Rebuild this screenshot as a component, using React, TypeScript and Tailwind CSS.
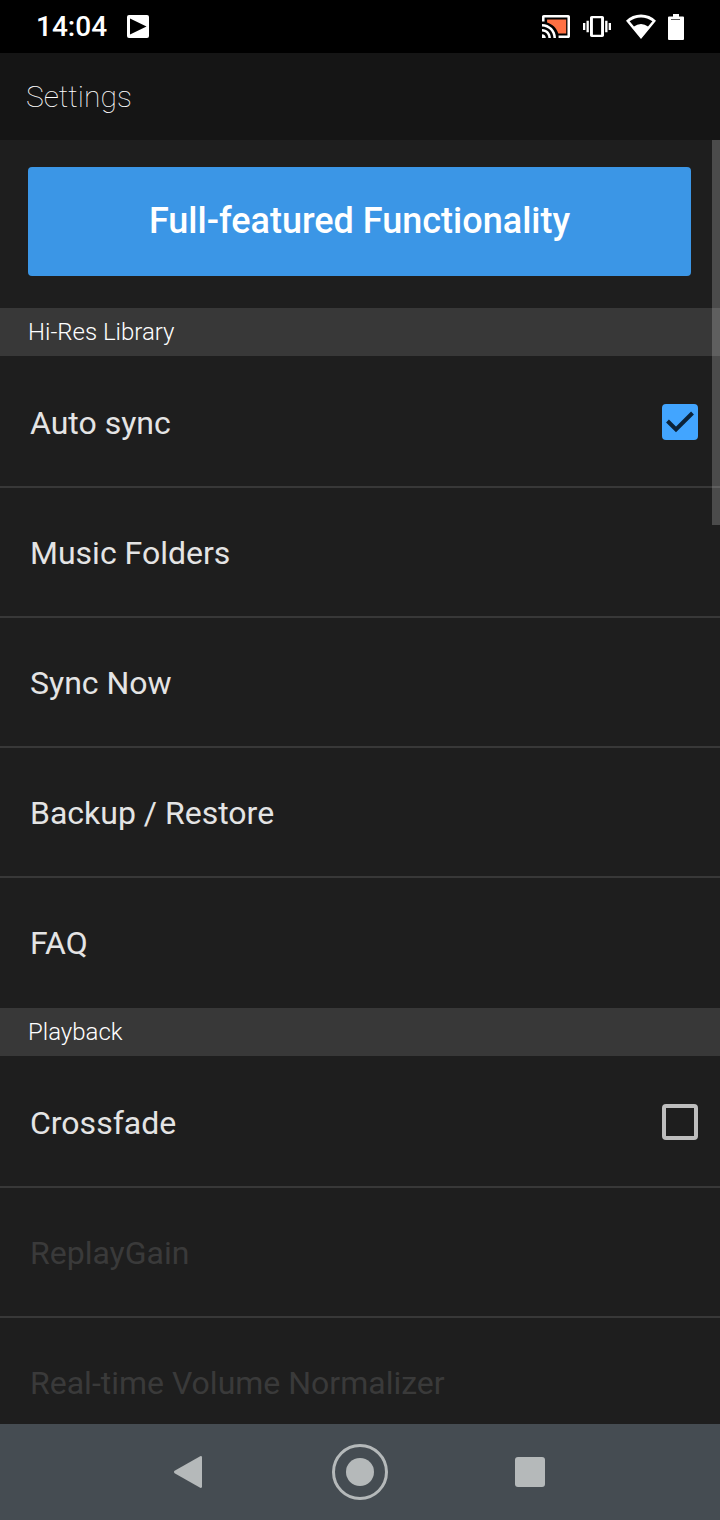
import React, { useState } from "react";

const CastIcon = () => (
  <svg width="28" height="23" viewBox="1 3 22 18" preserveAspectRatio="none">
    <path
      fill="#ff7043"
      d="M5 6.6h15v10.8h-6.2C12.5 13.3 9.2 10 5 8.8z"
    />
    <path
      fill="#fff"
      d="M1 18v3h3c0-1.66-1.34-3-3-3zm0-4v2c2.76 0 5 2.24 5 5h2c0-3.87-3.13-7-7-7zM1 10v2c4.97 0 9 4.03 9 9h2c0-6.08-4.93-11-11-11zM21.6 3H2.4C1.6 3 1 3.6 1 4.4V8h2V5h18v14h-7v2h7.6c.8 0 1.4-.6 1.4-1.4V4.4c0-.8-.6-1.4-1.4-1.4z"
    />
  </svg>
);

const VibrateIcon = () => (
  <svg width="28" height="21" viewBox="0 3 24 18" fill="#fff">
    <path d="M0 15h2V9H0v6zm3 2h2V7H3v10zm19-8v6h2V9h-2zm-3 8h2V7h-2v10zM16.5 3h-9C6.67 3 6 3.67 6 4.5v15c0 .83.67 1.5 1.5 1.5h9c.83 0 1.5-.67 1.5-1.5v-15c0-.83-.67-1.5-1.5-1.5zM15.5 19h-7V5h7v14z" />
  </svg>
);

const WifiIcon = () => (
  <svg width="30" height="25" viewBox="0 0 30 25" fill="#fff">
    <path
      fillRule="evenodd"
      d="M15 25 0 6.7A21 21 0 0 1 30 6.7zM3.6 7.2 8 12.6A11 11 0 0 1 22 12.6L26.4 7.2A19 19 0 0 0 3.6 7.2z"
    />
  </svg>
);

const BatteryIcon = () => (
  <svg width="16" height="26" viewBox="0 0 16 26">
    <path
      fill="#fff"
      d="M5 0h6v2.4h4q1 0 1 1V25q0 1-1 1H1q-1 0-1-1V3.4q0-1 1-1h4z"
    />
    <path fill="#555" d="M3 5h9v1H3z" />
  </svg>
);

const StatusBar = () => (
  <header className="flex h-[53px] shrink-0 items-center justify-between bg-black pr-9 pl-9">
    <div className="flex items-center gap-5">
      <span className="text-[28px] leading-8 font-medium text-white">14:04</span>
      <svg width="23" height="23" viewBox="0 0 23 23">
        <rect width="22" height="23" rx="2" fill="#fff" />
        <path d="M3 3.5v16L19.500 11.500z" fill="#000" />
      </svg>
    </div>
    <div className="flex items-center">
      <CastIcon />
      <span className="ml-[13px]">
        <VibrateIcon />
      </span>
      <span className="ml-[15px]">
        <WifiIcon />
      </span>
      <span className="ml-3">
        <BatteryIcon />
      </span>
    </div>
  </header>
);

const SectionTitle = ({ children }: { children: React.ReactNode }) => (
  <h2 className="mb-0.5 flex h-12 items-center bg-[#383838] px-7 text-[24px] leading-8 font-light text-white">
    {children}
  </h2>
);

const rowClass =
  "flex h-[130px] w-full items-center justify-between border-b-2 border-[#383838] pr-[22px] pl-[30px] text-left text-[32px] leading-10 text-[#e4e4e4]";

const LinkRow = ({
  label,
  disabled,
  last,
}: {
  label: string;
  disabled?: boolean;
  last?: boolean;
}) => (
  <li>
    <button
      type="button"
      disabled={disabled}
      className={`${rowClass} disabled:text-[#3a3a3a] ${last ? "border-b-transparent" : ""}`}
    >
      <span className="pt-0.5">{label}</span>
    </button>
  </li>
);

const CheckRow = ({ label, initial }: { label: string; initial: boolean }) => {
  const [checked, setChecked] = useState(initial);

  return (
    <li>
      <label className={rowClass}>
        <span className="pt-0.5">{label}</span>
        <span className="relative flex">
          <input
            type="checkbox"
            checked={checked}
            onChange={(e) => setChecked(e.target.checked)}
            className="size-9 appearance-none rounded border-4 border-[#bdbdbd] checked:border-[#42a5ff] checked:bg-[#42a5ff]"
          />
          {checked && (
            <svg
              className="pointer-events-none absolute inset-0"
              width="36"
              height="36"
              viewBox="0 0 36 36"
            >
              <path
                d="M5.500 17 14 25.500 30.500 9"
                fill="none"
                stroke="#0b2238"
                strokeWidth="4"
              />
            </svg>
          )}
        </span>
      </label>
    </li>
  );
};

const NavBar = () => (
  <nav className="flex h-24 shrink-0 items-center justify-center bg-[#454c52]">
    <button type="button" aria-label="Back" className="flex w-[170px] justify-center">
      <svg width="32" height="32" viewBox="0 0 32 32" fill="#b5b9ba">
        <path d="M.6 14.800 26.200.2Q28 -.3 28 1.500V30.500Q28 32.300 26.200 31.800L.6 17.200Q-.6 16 .6 14.800z" />
      </svg>
    </button>
    <button type="button" aria-label="Home" className="flex w-[170px] justify-center">
      <svg width="56" height="56" viewBox="0 0 56 56">
        <circle cx="28" cy="28" r="26.500" fill="none" stroke="#b5b9ba" strokeWidth="3" />
        <circle cx="28" cy="28" r="14" fill="#b5b9ba" />
      </svg>
    </button>
    <button type="button" aria-label="Recent apps" className="flex w-[170px] justify-center">
      <span className="size-[30px] rounded-[3px] bg-[#b5b9ba]" />
    </button>
  </nav>
);

const App = () => {
  return (
    <div className="flex h-screen flex-col bg-[#1e1e1e] font-['Roboto',sans-serif]">
      <StatusBar />
      <div className="flex h-[87px] shrink-0 items-center bg-[#151515] px-[26px]">
        <h1 className="text-[30px] leading-10 font-thin text-white">Settings</h1>
      </div>
      <div className="relative flex min-h-0 flex-1 flex-col">
        <main className="flex-1 overflow-y-auto [scrollbar-width:none]">
          <div className="pt-[27px] pr-[29px] pb-8 pl-7">
            <button
              type="button"
              className="h-[109px] w-full rounded bg-[#3b96e6] pb-0.5 text-[36px] leading-10 font-medium text-white"
            >
              Full-featured Functionality
            </button>
          </div>
          <SectionTitle>Hi-Res Library</SectionTitle>
          <ul>
            <CheckRow label="Auto sync" initial={true} />
            <LinkRow label="Music Folders" />
            <LinkRow label="Sync Now" />
            <LinkRow label="Backup / Restore" />
            <LinkRow label="FAQ" last />
          </ul>
          <SectionTitle>Playback</SectionTitle>
          <ul>
            <CheckRow label="Crossfade" initial={false} />
            <LinkRow label="ReplayGain" disabled />
            <LinkRow label="Real-time Volume Normalizer" disabled />
          </ul>
        </main>
        {/* scroll thumb */}
        <div className="pointer-events-none absolute top-0 right-0 h-[30%] w-2 bg-white/20" />
      </div>
      <NavBar />
    </div>
  );
};

export default App;
